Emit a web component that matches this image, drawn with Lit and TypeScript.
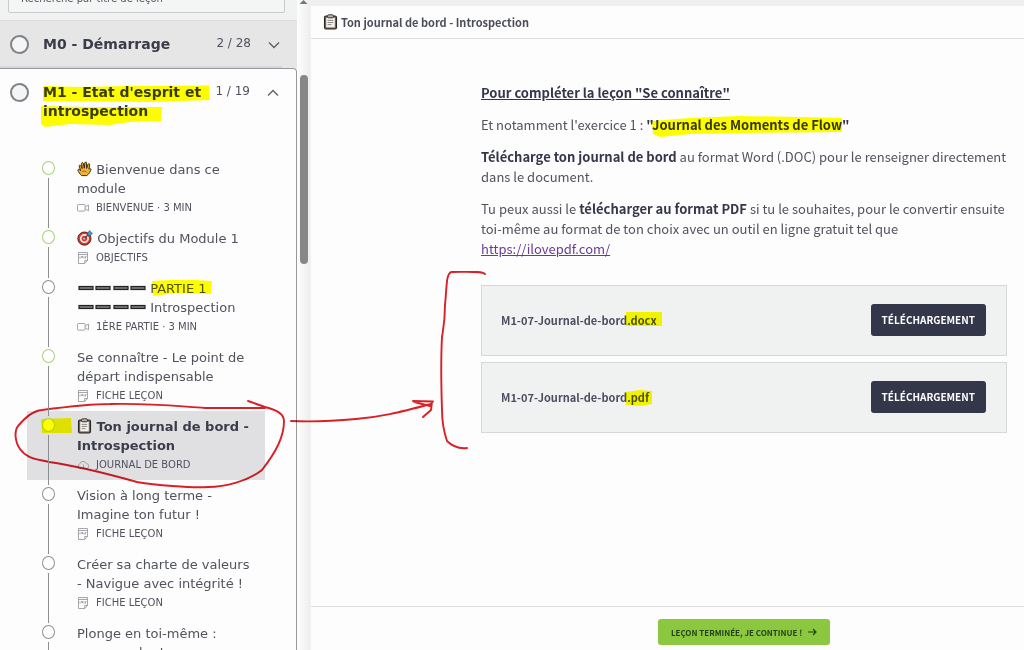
import { LitElement, html, css, svg, nothing, TemplateResult } from "lit";
import { customElement, property } from "lit/decorators.js";

type Kind = "video" | "pdf" | "cloud";

interface Lesson {
  title: TemplateResult;
  meta: string;
  kind: Kind;
  started?: boolean;
  active?: boolean;
}

const clipboard = html`<svg class="emoji" viewBox="0 0 15 16" aria-hidden="true">
  <rect x="1.5" y="2" width="12" height="13" rx="1.4" fill="#7a6350" stroke="#2b2725" stroke-width="1.1" />
  <rect x="3.2" y="3.6" width="8.6" height="9.8" fill="#f3f1ec" />
  <path d="M4.6 6.4h5.6M4.6 8.5h5.6M4.6 10.6h4" stroke="#8b8b8b" stroke-width="1" />
  <rect x="4.6" y="0.8" width="5.8" height="3" rx="1" fill="#b9b5ae" stroke="#2b2725" stroke-width="0.9" />
</svg>`;

const hand = html`<svg class="emoji" viewBox="0 0 15 16" aria-hidden="true">
  <path
    d="M4.600 14.600C3 13 1.200 10.800.9 9.200c-.1-1 1.100-1.300 1.800-.5l1 1.100L2.200 5.200c-.3-1.200 1.200-1.600 1.700-.5L5.200 7.600 4.600 2.600c-.1-1.300 1.500-1.400 1.800-.2l.9 4.800.5-5.300c.2-1.200 1.800-1.100 1.800.1l0 5.400 1.400-4.100c.4-1.100 1.900-.6 1.700.5l-.8 4.400c.6-.7 1.800-.8 2.100.1-.5 1.700-1.500 4.300-4.200 6.300z"
    fill="#f6b32c" stroke="#3a2a12" stroke-width="1" stroke-linejoin="round" />
  <path d="M5.200 10.800c1.600-1.200 3.600-1 4.600.8" fill="none" stroke="#7a5313" stroke-width=".8" />
</svg>`;

const target = html`<svg class="emoji wide" viewBox="0 0 16 16" aria-hidden="true">
  <circle cx="7.400" cy="8.600" r="6.600" fill="#d8382c" stroke="#4a1b18" stroke-width=".9" />
  <circle cx="7.400" cy="8.600" r="4.500" fill="#f4f1ef" />
  <circle cx="7.400" cy="8.600" r="2.800" fill="#d8382c" />
  <circle cx="7.400" cy="8.600" r="1" fill="#fff" />
  <path d="M7.500 8.500 12 4" stroke="#2c4a60" stroke-width="1.200" />
  <path d="M10.600 5.400 10.800 2.600 13 .6l.5 2 2 .5-2 2.200z" fill="#3fa4dc" stroke="#24506e" stroke-width=".7" />
</svg>`;

const dashes = html`<svg class="dashes" viewBox="0 0 69 6" aria-hidden="true">
  ${[0, 17, 35, 52].map(
    (x) => svg`<rect x=${x + 2} y="1.500" width="14" height="3" fill="#77777b" stroke="#222226" stroke-width="1.200" />`
  )}
</svg>`;

const kindIcon = (kind: Kind) => {
  if (kind === "video")
    return html`<svg class="kind" viewBox="0 0 13 12" aria-hidden="true">
      <rect x=".5" y="2.500" width="7.600" height="6.600" rx=".8" />
      <path d="M8.200 5 11.500 3v5.800L8.200 6.800" />
    </svg>`;
  if (kind === "pdf")
    return html`<svg class="kind" viewBox="0 0 13 12" aria-hidden="true">
      <path d="M1.500.5h9v8L7.700 11.500H1.500zM10.500 8.500H7.700v3M1.500 2.500h9M3 4.500v2M4.500 4.500h1.300v1H4.500zM7 4.500v2M8.500 6.500v-2h1" />
    </svg>`;
  return html`<svg class="kind" viewBox="0 0 13 12" aria-hidden="true">
    <path d="M4 9.500H3A2.300 2.300 0 0 1 2.800 5 3.500 3.500 0 0 1 9.400 4.600 2.500 2.500 0 0 1 10 9.500H9M6.500 5.500v4.500M5 8.500 6.500 10 8 8.500" />
  </svg>`;
};

const lessons: Lesson[] = [
  { title: html`${hand} Bienvenue dans ce module`, meta: "BIENVENUE · 3 MIN", kind: "video", started: true },
  { title: html`${target} Objectifs du Module 1`, meta: "OBJECTIFS", kind: "pdf", started: true },
  { title: html`${dashes} PARTIE 1<br />${dashes} Introspection`, meta: "1ÈRE PARTIE · 3 MIN", kind: "video" },
  { title: html`Se connaître - Le point de départ indispensable`, meta: "FICHE LEÇON", kind: "pdf", started: true },
  { title: html`${clipboard} Ton journal de bord - Introspection`, meta: "JOURNAL DE BORD", kind: "cloud", started: true, active: true },
  { title: html`Vision à long terme - Imagine ton futur !`, meta: "FICHE LEÇON", kind: "pdf" },
  { title: html`Créer sa charte de valeurs - Navigue avec intégrité !`, meta: "FICHE LEÇON", kind: "pdf" },
  { title: html`Plonge en toi-même : comprendre ton`, meta: "FICHE LEÇON", kind: "pdf" },
];

@customElement("lesson-item")
class LessonItem extends LitElement {
  @property({ attribute: false }) lesson!: Lesson;

  static styles = css`
    :host { display: block; }
    .item { display: grid; grid-template-columns: 14px 1fr; column-gap: 22px; min-height: 50px;
      margin: 0 31px 0 27px; padding-left: 14px; color: #50525e; text-decoration: none; }
    .active { background: #e0e0e2; }
    .rail { display: flex; flex-direction: column; align-items: center; padding-top: 7px; }
    .dot { box-sizing: border-box; width: 13px; height: 14px; border: 1px solid #8d8f96; border-radius: 50%; background: #fff; }
    .started { border-color: #a4d27a; }
    .line { position: relative; z-index: 1; flex: 1; width: 1px; margin: 3px 0 -5px; background: #8b8d90; }
    .text { padding: 6px 10px 7px 0; }
    .title { display: block; font-size: 13px; line-height: 19px; }
    .active .title { font-weight: bold; color: #3a3c4c; }
    .meta { display: flex; align-items: center; gap: 6px; margin-top: 1px; font-size: 10px; line-height: 17px; }
    .kind { width: 13px; height: 12px; fill: none; stroke: #8f9197; stroke-width: 0.8; }
    .emoji { width: 15px; height: 16px; vertical-align: -3px; }
    .wide { width: 16px; }
    .dashes { width: 69px; height: 6px; vertical-align: 2px; }
  `;

  render() {
    const { title, meta, kind, started, active } = this.lesson;
    return html`<a class="item ${active ? "active" : ""}" href="#" aria-current=${active ? "page" : nothing}>
      <span class="rail"><span class="dot ${started ? "started" : ""}"></span><span class="line"></span></span>
      <span class="text">
        <span class="title">${title}</span>
        <span class="meta">${kindIcon(kind)}<span>${meta}</span></span>
      </span>
    </a>`;
  }
}

@customElement("app-root")
class AppRoot extends LitElement {
  static styles = css`
    :host { display: grid; grid-template-columns: 310px 1fr; height: 100vh; overflow: hidden; position: relative;
      background: #fdfdfd; font-family: "Noto Sans CJK SC", "Noto Sans", sans-serif; color: #50525e; }
    button { font: inherit; color: inherit; border: 0; cursor: pointer; }

    .sidebar { display: grid; grid-template-columns: 1fr 13px; min-height: 0; overflow: hidden;
      font-family: "DejaVu Sans", sans-serif; }
    .course { display: flex; flex-direction: column; min-width: 0; min-height: 0; overflow: hidden; background: #f1f2f2; }
    .search { flex: none; display: flex; align-items: flex-end; height: 20px; padding: 0 12px 7px 8px; box-sizing: border-box; overflow: hidden; }
    .search input { flex: 1; min-width: 0; height: 30px; box-sizing: border-box; padding: 0 12px; border: 1px solid #c9cbcf;
      border-radius: 2px; background: #f4f5f5; font: 10px "DejaVu Sans", sans-serif; }
    .search input::placeholder { color: #55575f; opacity: 1; }
    .module { flex: none; display: grid; grid-template-columns: 19px 1fr auto 12px; align-items: start; width: 100%;
      padding: 14px 17px 14px 10px; text-align: left; background: none; }
    .closed { border-top: 1px solid #dcdde0;
      background: linear-gradient(#d6d7da, #d6d7da) 0 100% / 95% 2px no-repeat #e6e6e6; }
    .ring { box-sizing: border-box; width: 19px; height: 19px; border: 2px solid #80828a; border-radius: 50%; background: #f4f5f5; }
    .name { padding-left: 14px; font-size: 14px; line-height: 19px; font-weight: bold; color: #3a3c4c; }
    .count { font-size: 12px; line-height: 16px; padding: 0 17px 0 7px; }
    .chevron { width: 12px; height: 12px; margin-top: 4px; fill: none; stroke: #5f6168; stroke-width: 1.4; }
    .open { flex: 1 0 auto; border: solid #97999e; border-width: 1px 1px 0 0; border-radius: 0 4px 0 0; background: #fdfdfd; }
    .lessons { margin: 0; padding: 19px 0 0; list-style: none; }
    .scroll { display: flex; flex-direction: column; align-items: center; background: linear-gradient(90deg, #fdfdfd, #eeeeee); }
    .up { width: 8px; height: 4px; margin-bottom: 71px; background: #777; clip-path: polygon(50% 0, 100% 100%, 0 100%); }
    .thumb { width: 8px; height: 29%; border-radius: 4px; background: #878787; }

    .main { display: flex; flex-direction: column; min-width: 0; border-left: 1px solid #f1f1f1; box-sizing: border-box; }
    .top { display: flex; align-items: center; gap: 3px; padding: 0 12px; height: 32px; border-top: 6px solid #efefef;
      border-bottom: 1px solid #dedee1; }
    .top h1 { margin: 0; font-size: 11px; line-height: 20px; font-weight: bold; color: #4a4c57; }
    .emoji { width: 15px; height: 16px; }
    .content { flex: 1; padding: 44px 17px 0 170px; font-size: 13px; line-height: 20px; }
    .content p { margin: 0 0 12px; }
    .content strong { color: #34364a; }
    .content a { color: #6b3a95; }
    .files { display: grid; gap: 6px; margin: 26px 0 0; padding: 0; list-style: none; }
    .file { display: flex; align-items: center; justify-content: space-between; padding: 18px 20px 19px 19px;
      border: 1px solid #d5d8d9; background: #f0f2f2; font-size: 11px; font-weight: bold; color: #4c4e60; }
    .download { height: 32px; padding: 0 11px; border-radius: 3px; background: #34364a; color: #fff; font-size: 10px; font-weight: bold; }
    .bottom { display: flex; justify-content: center; padding: 12px 17px 5px 170px; border-top: 1px solid #dedee1; }
    .next { display: flex; align-items: center; gap: 6px; height: 26px; padding: 0 13px; border-radius: 3px;
      background: #8bc83f; color: #26401a; font-size: 8px; font-weight: bold; }
    .next svg { width: 9px; height: 8px; fill: none; stroke: currentColor; stroke-width: 1.2; }

    .notes { position: absolute; top: 0; left: 0; width: 1024px; height: 650px; pointer-events: none; mix-blend-mode: multiply; }
    .marker { fill: #ffff00; }
    .pen { fill: none; stroke: #dc2027; stroke-width: 1.9; stroke-linecap: round; stroke-linejoin: round; }
  `;

  render() {
    return html`
      <nav class="sidebar" aria-label="Leçons">
        <div class="course">
          <div class="search"><input type="search" aria-label="Recherche par titre de leçon" placeholder="Recherche par titre de leçon" /></div>
          <button class="module closed" aria-expanded="false">
            <span class="ring"></span><span class="name">M0 - Démarrage</span><span class="count">2 / 28</span>
            <svg class="chevron" viewBox="0 0 12 12"><path d="M1 3.500 6 8.500l5-5" /></svg>
          </button>
          <section class="open">
            <button class="module" aria-expanded="true">
              <span class="ring"></span><span class="name">M1 - Etat d'esprit et introspection</span><span class="count">1 / 19</span>
              <svg class="chevron" viewBox="0 0 12 12"><path d="M1 8.500 6 3.500l5 5" /></svg>
            </button>
            <ul class="lessons">
              ${lessons.map((lesson) => html`<li><lesson-item .lesson=${lesson}></lesson-item></li>`)}
            </ul>
          </section>
        </div>
        <div class="scroll"><span class="up"></span><span class="thumb"></span></div>
      </nav>

      <main class="main">
        <header class="top">${clipboard}<h1>Ton journal de bord - Introspection</h1></header>
        <article class="content">
          <p><strong><u>Pour compléter la leçon "Se connaître"</u></strong></p>
          <p>Et notamment l'exercice 1 : <strong>"Journal des Moments de Flow"</strong></p>
          <p><strong>Télécharge ton journal de bord</strong> au format Word (.DOC) pour le renseigner directement dans le document.</p>
          <p>Tu peux aussi le <strong>télécharger au format PDF</strong> si tu le souhaites, pour le convertir ensuite
            toi-même au format de ton choix avec un outil en ligne gratuit tel que
            <a href="https://ilovepdf.com/">https://ilovepdf.com/</a></p>
          <ul class="files">
            ${["docx", "pdf"].map(
              (ext) => html`<li class="file"><span>M1-07-Journal-de-bord.${ext}</span><button class="download">TÉLÉCHARGEMENT</button></li>`
            )}
          </ul>
        </article>
        <footer class="bottom">
          <button class="next">LEÇON TERMINÉE, JE CONTINUE !
            <svg viewBox="0 0 9 8" aria-hidden="true"><path d="M0 4h8M5 1l3 3-3 3" /></svg>
          </button>
        </footer>
      </main>

      <svg class="notes" viewBox="0 0 1024 650" aria-hidden="true">
        <g class="marker">
          <path d="M43 86 80 87 130 86 209 85.500 210 100 150 102 43 101z" />
          <path d="M41 106 90 107 162 107 161 121 130 122 110 125 70 124 45 127 41 124z" />
          <path d="M152 281 170 280 195 280 212 281 211 294 175 293 153 296z" />
          <path d="M41 419 71 418 72 433 42 433z" />
          <path d="M652 121 690 118 740 116 800 117 842 118 842 132 740 133 690 134 660 137 653 134z" />
          <path d="M626 312H662V326H626z" />
          <path d="M626 392 640 390 652 391 652 404 640 406 626 405z" />
        </g>
        <g class="pen">
          <path d="M248 401 265 407C278 410 284 414 284 421 284 437 276 452 262 470 248 481 225 487 208 487 190 488 155 485 137 482 112 475 78 466 49 462 37 459 27 459 20 449 15 442 14 431 18 426 25 418 32 411 42 410 65 407 88 404 110 404 150 403 175 406 205 408H265" />
          <path d="M291 421C315 422 334 421 356 419 380 417 397 413 431 404M413 401 433 401.500M432 402 431 410 423 417M414 402 430 406" />
          <path d="M485 274C482 271 470 272 451 272 446 275 447 285 445 305 445 322 443 330 442 337 441 355 441 380 442 410 442 425 445 435 447 441 452 446 458 449 467 448" />
        </g>
      </svg>
    `;
  }
}
